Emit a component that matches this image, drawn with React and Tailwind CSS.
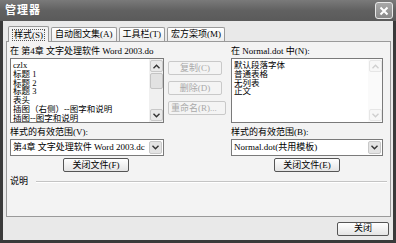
const font = { fontFamily: '"Liberation Serif", "Noto Sans CJK SC", serif' };

const Btn = ({ children, disabled, className = '' }) => (
  <div
    className={`flex items-center justify-center h-[14px] border rounded-[2px] text-[9px] leading-none ${
      disabled
        ? 'border-[#c9c9c9] bg-[#f4f4f4] text-[#a9a9a9]'
        : 'border-[#555] bg-gradient-to-b from-white to-[#e4e4e4] text-black'
    } ${className}`}
  >
    {children}
  </div>
);

const ScrollArrow = ({ dir, faded }) => (
  <div className={`h-[12px] w-[13px] flex items-center justify-center border rounded-[2px] ${faded ? 'border-[#e6e6e6] bg-[#f7f7f7]' : 'border-[#c8c8c8] bg-[#e9e9e9]'}`}>
    <svg width="7" height="5" viewBox="0 0 7 5">
      <path
        d={dir === 'up' ? 'M0.5 4.2 L3.5 1.2 L6.5 4.2' : 'M0.5 0.8 L3.5 3.8 L6.5 0.8'}
        fill="none"
        stroke={faded ? '#cfcfcf' : '#333'}
        strokeWidth="1.4"
      />
    </svg>
  </div>
);

const ListBox = ({ items, faded, className = '' }) => (
  <div className={`flex border border-[#7a7a7a] bg-white ${className}`}>
    <div className="flex-1 overflow-hidden pl-[2px] pt-[2px] text-[8.5px] leading-[8.8px] text-black">
      {items.map((t) => (
        <div key={t} className="whitespace-nowrap h-[8.8px]">{t}</div>
      ))}
    </div>
    <div className={`w-[14px] flex flex-col justify-between p-[1px] ${faded ? 'bg-[#fafafa]' : 'bg-[#f0f0f0]'}`}>
      <div className="flex flex-col">
        <ScrollArrow dir="up" faded={faded} />
        {!faded && <div className="mt-[1px] h-[16px] w-[13px] border border-[#c4c4c4] bg-[#e2e2e2] rounded-[2px]" />}
      </div>
      <ScrollArrow dir="down" faded={faded} />
    </div>
  </div>
);

const Combo = ({ text, className = '' }) => (
  <div className={`flex h-[17px] border border-[#7a7a7a] bg-white ${className}`}>
    <div className="flex-1 min-w-0 overflow-hidden whitespace-nowrap pl-[2px] text-[9px] leading-[15px] text-black">{text}</div>
    <div className="m-[1px] w-[13px] flex items-center justify-center border border-[#c8c8c8] bg-[#e4e4e4] rounded-[2px]">
      <svg width="7" height="5" viewBox="0 0 7 5">
        <path d="M0.5 0.8 L3.5 3.8 L6.5 0.8" fill="none" stroke="#333" strokeWidth="1.4" />
      </svg>
    </div>
  </div>
);

export default function App() {
  const tabs = ['样式(S)', '自动图文集(A)', '工具栏(T)', '宏方案项(M)'];

  return (
    <div className="w-[396px] h-[243px] flex flex-col bg-[#3a3a3a] overflow-hidden" style={font}>
      {/* Title bar */}
      <div className="h-[21px] flex items-center justify-between pl-[5px] pr-[3px] bg-gradient-to-b from-[#7a7a7a] via-[#616161] to-[#5a5a5a]">
        <span className="text-[11px] font-bold text-white tracking-[1px]">管理器</span>
        <div className="w-[18px] h-[17px] flex items-center justify-center border border-[#e8e8e8] rounded-[3px] bg-gradient-to-b from-[#a8a8a8] to-[#8a8a8a]">
          <svg width="10" height="10" viewBox="0 0 10 10">
            <path d="M1.5 1.5 L8.5 8.5 M8.5 1.5 L1.5 8.5" stroke="white" strokeWidth="2" />
          </svg>
        </div>
      </div>

      {/* Body */}
      <div className="flex-1 mx-[3px] mb-[3px] flex flex-col bg-[#e9e9e9] pl-[3px] pr-[2px] pt-[6px]">
        {/* Tabs */}
        <div className="flex pl-[2px] h-[15px] items-end">
          {tabs.map((t, i) => (
            <div
              key={t}
              className={`h-[15px] mr-[2px] flex items-center px-[3px] text-[9px] border border-b-0 border-[#9a9a9a] rounded-t-[2px] text-black ${
                i === 0 ? 'bg-[#f3f3f3] relative z-10 h-[16px]' : 'bg-gradient-to-b from-white to-[#ececec]'
              }`}
            >
              <span className={i === 0 ? 'border border-dotted border-[#555] px-[1px] leading-[10px]' : ''}>{t}</span>
            </div>
          ))}
        </div>

        {/* Panel */}
        <div className="h-[176px] -mt-[1px] border border-[#9a9a9a] bg-[#f3f3f3] px-[3px] pt-[3px] flex flex-col">
          <div className="flex">
            {/* Left column */}
            <div className="w-[154px] flex flex-col">
              <div className="text-[9px] leading-[12px] whitespace-nowrap">在 第4章 文字处理软件 Word 2003.do</div>
              <ListBox
                className="h-[65px] mt-[1px]"
                items={['czlx', '标题 1', '标题 2', '标题 3', '表头', '插图（右侧）--图字和说明', '插图--图字和说明']}
              />
              <div className="mt-[3px] text-[9px] leading-[12px]">样式的有效范围(V):</div>
              <Combo className="mt-[1px]" text="第4章 文字处理软件 Word 2003.dc" />
              <div className="flex justify-center mt-[2px] pl-[18px]">
                <Btn className="w-[66px]">关闭文件(F)</Btn>
              </div>
            </div>

            {/* Middle buttons */}
            <div className="w-[58px] ml-[4px] pt-[16px] flex flex-col gap-[6px]">
              <Btn disabled className="w-[54px]">复制(C)</Btn>
              <Btn disabled className="w-[54px]">删除(D)</Btn>
              <Btn disabled className="w-[58px] justify-start pl-[2px]">重命名(R)...</Btn>
            </div>

            {/* Right column */}
            <div className="w-[152px] ml-[5px] flex flex-col">
              <div className="text-[9px] leading-[12px] whitespace-nowrap">在 Normal.dot 中(N):</div>
              <ListBox
                faded
                className="h-[65px] mt-[1px]"
                items={['默认段落字体', '普通表格', '无列表', '正文']}
              />
              <div className="mt-[3px] text-[9px] leading-[12px]">样式的有效范围(B):</div>
              <Combo className="mt-[1px]" text="Normal.dot(共用模板)" />
              <div className="flex justify-center mt-[2px]">
                <Btn className="w-[66px]">关闭文件(E)</Btn>
              </div>
            </div>
          </div>

          {/* Description */}
          <div className="mt-[3px] flex items-center text-[9px]">
            <span>说明</span>
            <div className="ml-[8px] flex-1 h-[2px] border-t border-[#c4c4c4] border-b border-b-white" />
          </div>
        </div>

        {/* Footer */}
        <div className="flex-1 flex items-center justify-end pr-[2px]">
          <Btn className="w-[52px] border-[#444]">关闭</Btn>
        </div>
      </div>
    </div>
  );
}
